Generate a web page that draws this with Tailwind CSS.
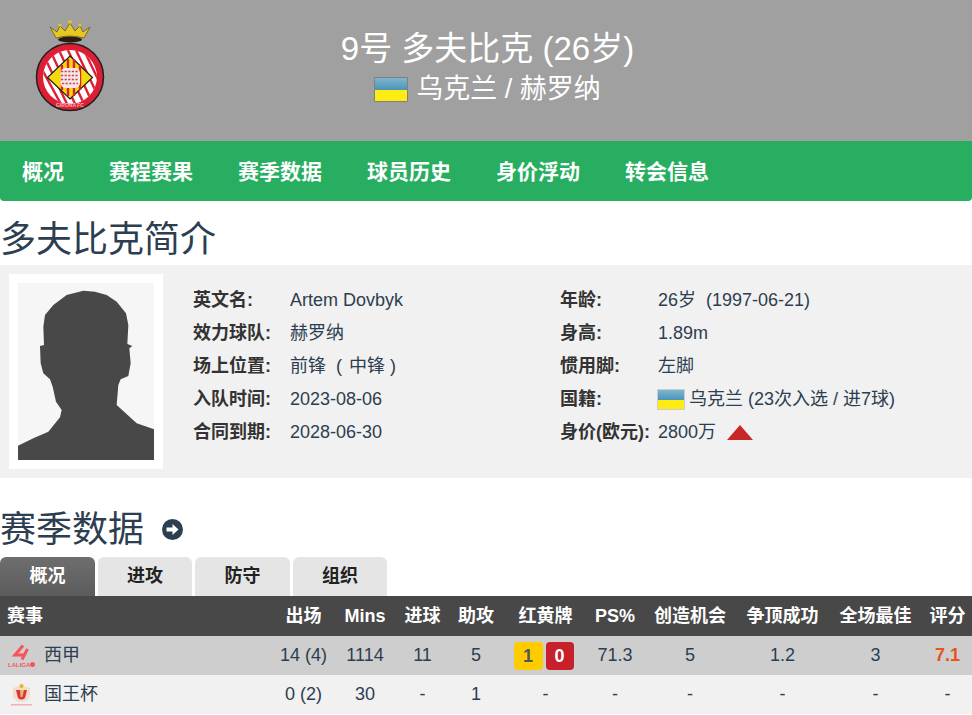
<!DOCTYPE html>
<html lang="zh">
<head>
    <meta charset="UTF-8">
    <title>多夫比克</title>
    <script src="https://cdn.jsdelivr.net/npm/@tailwindcss/browser@4"></script>
</head>
<body class="bg-white text-[18px] text-[#2c3e50] font-['Liberation_Sans','Noto_Sans_CJK_SC',sans-serif]">
    <!-- Header -->
    <header class="h-[141px] bg-[#a0a0a0] grid grid-cols-[140px_1fr_140px] text-white">
        <div class="flex justify-center pt-[18px]">
            <svg width="80" height="96" viewBox="30 18 80 96">
                <defs>
                    <clipPath id="crest-inner"><circle cx="70" cy="77" r="27"/></clipPath>
                </defs>
                <!-- crown -->
                <ellipse cx="70" cy="39.5" rx="12" ry="3" fill="#2a1c10"/>
                <path d="M50 27 L57 32 L60 26 L65 31 L70 23 L75 31 L80 26 L83 32 L90 27 L84 38 Q70 34 56 38 Z" fill="#e6c81e" stroke="#5e4f12" stroke-width="0.7"/>
                <circle cx="60" cy="25" r="1.6" fill="#e6c81e"/>
                <circle cx="70" cy="22" r="1.8" fill="#e6c81e"/>
                <circle cx="80" cy="25" r="1.6" fill="#e6c81e"/>
                <!-- badge -->
                <circle cx="70" cy="77" r="33.5" fill="#dd1f35" stroke="#1f1f1f" stroke-width="1.5"/>
                <circle cx="70" cy="77" r="27" fill="#fff"/>
                <g clip-path="url(#crest-inner)" stroke="#dd1f35" stroke-width="2.4">
                    <path d="M38 62 L62 106 M44 56 L68 106 M50 50 L76 106 M58 48 L84 104 M66 46 L92 102 M74 46 L100 100 M82 46 L106 96"/>
                </g>
                <path d="M70 56 L92.5 77.5 L70 99 L47.5 77.5 Z" fill="#f5d90a" stroke="#1b1b1b" stroke-width="1.2"/>
                <path d="M62 65 V90 M68 59 V96 M74 59 V96 M80 65 V90" stroke="#dd1f35" stroke-width="2.4"/>
                <rect x="60.5" y="68" width="19.5" height="20" rx="5" fill="#f6e6e6"/>
                <path d="M61 71.5 H79 M61 75.5 H79 M61 79.5 H79 M62 83.5 H78" stroke="#c9454f" stroke-width="1.3" stroke-dasharray="2.2 1.4"/>
                <text x="70" y="107" text-anchor="middle" font-size="5" font-weight="700" fill="#f3b4ba">GIRONA FC</text>
            </svg>
        </div>
        <div class="text-center pt-[27px] pl-[3px]">
            <h1 class="text-[33px] leading-[44px]">9号 多夫比克 (26岁)</h1>
            <div class="flex items-center justify-center gap-[8px] text-[27px] leading-[37px]">
                <span class="w-[34px] h-[25px] flex flex-col border border-black/20 rounded-[1px]">
                    <span class="flex-1 bg-gradient-to-b from-[#7eb5d0] to-[#4b93ba]"></span>
                    <span class="flex-1 bg-[#ffec14]"></span>
                </span>
                <span>乌克兰 / 赫罗纳</span>
            </div>
        </div>
        <div></div>
    </header>

    <!-- Nav -->
    <nav class="h-[60px] bg-[#27ae60] rounded-b-[4px] flex items-center pl-[22px] pt-[1px] gap-[45px] text-white text-[21px] font-bold">
        <a>概况</a>
        <a>赛程赛果</a>
        <a>赛季数据</a>
        <a>球员历史</a>
        <a>身价浮动</a>
        <a>转会信息</a>
    </nav>

    <h2 class="h-[64px] pt-[10px] text-[36px] leading-[58px]">多夫比克简介</h2>

    <!-- Profile -->
    <section class="h-[213px] bg-[#f1f1f1] flex pl-[9px] pt-[9px]">
        <div class="w-[154px] h-[195px] bg-white p-[9px] shrink-0">
            <svg width="136" height="177" viewBox="54 39 408 531" class="bg-[#f6f6f6]">
                <path fill="#484848" d="M250 62 L200 75 L160 105 L135 135 L130 170 L132 225 L120 228 L122 280 L130 310 L150 328 L158 350 L168 395 L185 420 L180 442 L145 485 L100 505 L54 527 L54 570 L462 570 L462 478 L410 460 L350 405 L355 345 L362 328 L385 318 L392 280 L388 235 L397 228 L382 222 L385 165 L378 130 L350 95 L320 75 L285 65 Z"/>
            </svg>
        </div>
        <div class="ml-[30px] pt-[10px] grid grid-cols-[97px_270px_98px_1fr] auto-rows-[33px] items-center">
            <b class="text-[#333]">英文名:</b><span>Artem Dovbyk</span>
            <b class="text-[#333]">年龄:</b><span>26岁&nbsp; (1997-06-21)</span>
            <b class="text-[#333]">效力球队:</b><span>赫罗纳</span>
            <b class="text-[#333]">身高:</b><span>1.89m</span>
            <b class="text-[#333]">场上位置:</b><span>前锋&nbsp; (&nbsp;<span class="ml-[2px]">中锋</span> )</span>
            <b class="text-[#333]">惯用脚:</b><span>左脚</span>
            <b class="text-[#333]">入队时间:</b><span>2023-08-06</span>
            <b class="text-[#333]">国籍:</b>
            <span class="flex items-center gap-[4px] -ml-[1px]">
                <span class="w-[28px] h-[21px] flex flex-col border border-black/15 rounded-[1px]">
                    <span class="flex-1 bg-gradient-to-b from-[#7eb5d0] to-[#4b93ba]"></span>
                    <span class="flex-1 bg-[#ffec14]"></span>
                </span>
                乌克兰 (23次入选 / 进7球)
            </span>
            <b class="text-[#333]">合同到期:</b><span>2028-06-30</span>
            <b class="text-[#333]">身价(欧元):</b>
            <span class="flex items-center gap-[11px]">
                2800万
                <span class="w-0 h-0 border-x-[13px] border-x-transparent border-b-[15px] border-b-[#c62828]"></span>
            </span>
        </div>
    </section>

    <!-- Season stats -->
    <div class="h-[79px] pt-[24px] flex items-center gap-[18px]">
        <h2 class="text-[36px] leading-[55px]">赛季数据</h2>
        <svg width="21" height="21" viewBox="0 0 21 21" class="-mt-[1px]">
            <circle cx="10.5" cy="10.5" r="10.5" fill="#2c3e50"/>
            <path d="M4.5 8.5 H10.5 V5 L16.5 10.5 L10.5 16 V12.5 H4.5 Z" fill="#fff"/>
        </svg>
    </div>

    <div class="flex gap-[3px] h-[39px] font-bold text-[#222]">
        <div class="w-[95px] rounded-t-[6px] bg-gradient-to-b from-[#6e6e6e] to-[#5c5c5c] text-white flex items-center justify-center">概况</div>
        <div class="w-[94px] rounded-t-[6px] bg-[#e5e5e5] flex items-center justify-center">进攻</div>
        <div class="w-[95px] rounded-t-[6px] bg-[#e5e5e5] flex items-center justify-center">防守</div>
        <div class="w-[94px] rounded-t-[6px] bg-[#e5e5e5] flex items-center justify-center">组织</div>
    </div>

    <table class="w-[972px] table-fixed border-collapse text-center">
        <colgroup>
            <col class="w-[274px]"><col class="w-[59px]"><col class="w-[64px]"><col class="w-[51px]"><col class="w-[56px]"><col class="w-[83px]"><col class="w-[56px]"><col class="w-[94px]"><col class="w-[91px]"><col class="w-[95px]"><col class="w-[49px]">
        </colgroup>
        <thead>
            <tr class="h-[40px] bg-[#484848] text-white font-bold">
                <td class="text-left pl-[7px]">赛事</td><td>出场</td><td>Mins</td><td>进球</td><td>助攻</td><td>红黄牌</td><td>PS%</td><td>创造机会</td><td>争顶成功</td><td>全场最佳</td><td>评分</td>
            </tr>
        </thead>
        <tbody>
            <tr class="h-[39px] bg-[#cecece]">
                <td class="text-left pl-[8px]">
                    <div class="flex items-center gap-[9px]">
                        <svg width="27" height="24" viewBox="0 0 27 24">
                            <path d="M15 1.5 L7 11 H17 M19.5 5 L14 15.5" fill="none" stroke="#f4555a" stroke-width="3"/>
                            <text x="0" y="22.5" font-size="6" font-weight="700" fill="#f4555a">LALIGA</text>
                            <circle cx="24.5" cy="20.5" r="2.5" fill="#f4555a"/>
                        </svg>
                        西甲
                    </div>
                </td>
                <td>14 (4)</td><td>1114</td><td>11</td><td>5</td>
                <td>
                    <div class="flex justify-center gap-[3px] font-bold pr-[4px] mt-[1px]">
                        <span class="w-[29px] h-[28px] rounded-[4px] bg-[#ffcc00] text-[#555] flex items-center justify-center">1</span>
                        <span class="w-[28px] h-[28px] rounded-[4px] bg-[#c8202a] text-white flex items-center justify-center">0</span>
                    </div>
                </td>
                <td>71.3</td><td>5</td><td>1.2</td><td>3</td><td class="font-bold text-[#e8531f]">7.1</td>
            </tr>
            <tr class="h-[39px] bg-[#f1f1f1]">
                <td class="text-left pl-[8px]">
                    <div class="flex items-center gap-[9px]">
                        <svg width="27" height="24" viewBox="0 0 27 24">
                            <path d="M5 5 Q13 1 22 5 V12 Q22 18 13.5 19 Q5 18 5 12 Z" fill="#f3dcc8"/>
                            <path d="M8 7 H19 L17 15 Q13.5 18 10 15 Z" fill="#d8334a"/>
                            <path d="M12 7 H16 L14.5 14 H12.5 Z" fill="#e9b93c"/>
                            <circle cx="13.5" cy="3" r="2" fill="#e2b23a"/>
                            <rect x="3" y="21" width="21" height="1.6" fill="#eeb6bb"/>
                        </svg>
                        国王杯
                    </div>
                </td>
                <td>0 (2)</td><td>30</td><td>-</td><td>1</td><td>-</td><td>-</td><td>-</td><td>-</td><td>-</td><td>-</td>
            </tr>
        </tbody>
    </table>
</body>
</html>
